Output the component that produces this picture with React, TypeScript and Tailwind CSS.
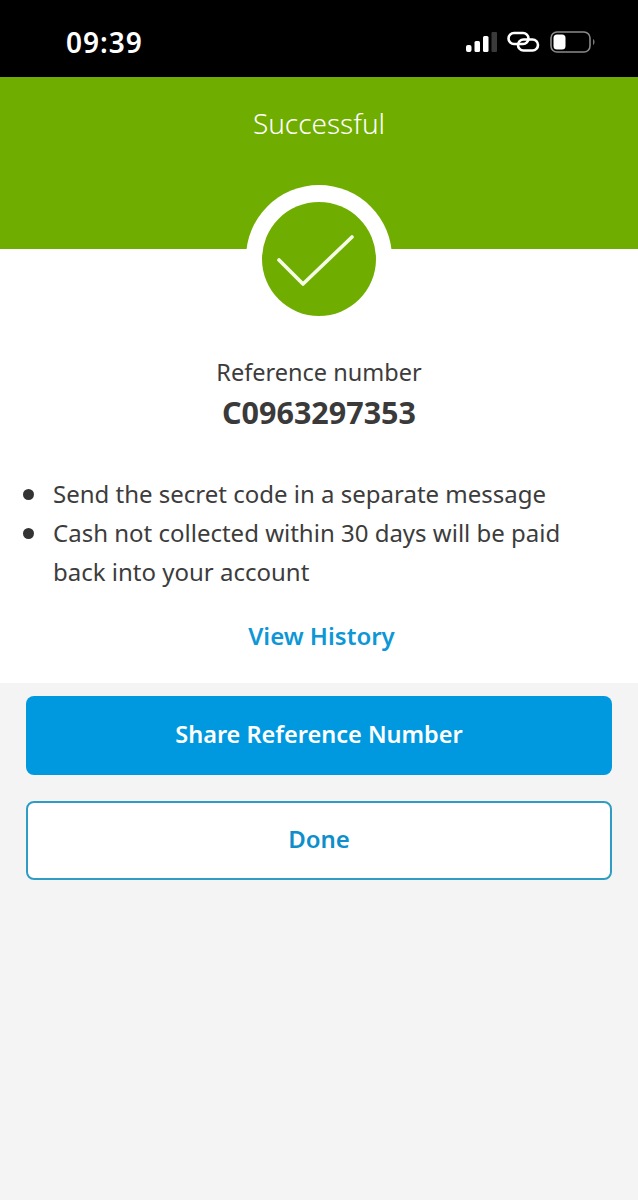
import React from 'react';

const font = { fontFamily: '"Noto Sans", sans-serif' };

const StatusIcons: React.FC = () => (
  <div className="flex items-center">
    <svg width="32" height="22" viewBox="0 0 32 22">
      <rect x="0" y="14" width="5.5" height="7" rx="2" fill="#fff" />
      <rect x="8.5" y="10" width="5.5" height="11" rx="1.5" fill="#fff" />
      <rect x="17" y="5" width="5.5" height="16" rx="1.5" fill="#fff" />
      <rect x="25.5" y="1" width="5.5" height="20" rx="1" fill="#3a3a3a" />
    </svg>
    <svg width="33" height="22" viewBox="0 0 33 22" fill="none" stroke="#fff" strokeWidth="2.6" className="ml-[9px]">
      <rect x="1.5" y="2" width="20" height="11" rx="5.5" />
      <rect x="11" y="8.5" width="20" height="11" rx="5.5" />
    </svg>
    <svg width="46" height="22" viewBox="0 0 46 22" fill="none" className="ml-[10px]">
      <rect x="1" y="1" width="39" height="20" rx="6" stroke="#8a8a8a" strokeWidth="1.6" />
      <rect x="3.5" y="3.5" width="12" height="15" rx="3.5" fill="#fff" />
      <path d="M43 8 C45 9 45 13 43 14 Z" fill="#777" />
    </svg>
  </div>
);

export default function App() {
  return (
    <div className="w-[638px] h-[1200px] bg-[#f4f4f4] flex flex-col overflow-hidden" style={font}>
      <div className="h-[77px] bg-black flex items-center justify-between pl-[66px] pr-[42px] pt-[6px]">
        <span className="text-white text-[28px] font-semibold leading-none tracking-[1px]">09:39</span>
        <StatusIcons />
      </div>

      <div className="h-[172px] bg-[#6fae00] flex justify-center pt-[27px]">
        <h1 className="text-white text-[28px] font-light leading-[38px]">Successful</h1>
      </div>

      <div className="h-[434px] bg-white flex flex-col items-center">
        <div className="-mt-[64px] w-[146px] h-[146px] rounded-full bg-white flex items-center justify-center">
          <div className="w-[114px] h-[114px] rounded-full bg-[#6fae00] flex items-center justify-center mt-[2px]">
            <svg width="80" height="58" viewBox="0 0 80 58" fill="none" className="mt-[8px] -ml-[7px]">
              <path d="M3 26 L27 50 L76 3" stroke="#f6fbe8" strokeWidth="3.6" strokeLinecap="round" strokeLinejoin="round" />
            </svg>
          </div>
        </div>

        <p className="mt-[21px] text-[#3c3c3c] text-[23.5px] leading-[40px]">Reference number</p>
        <p className="text-[#3a3a3a] text-[30.5px] font-bold leading-[40px]">C0963297353</p>

        <ul className="mt-[42px] w-full pl-[23px] pr-[40px] text-[#3c3c3c] text-[24px] leading-[39px]">
          <li className="flex">
            <span className="mt-[15px] mr-[19px] w-[11px] h-[11px] rounded-full bg-[#333] shrink-0" />
            <span>Send the secret code in a separate message</span>
          </li>
          <li className="flex">
            <span className="mt-[15px] mr-[19px] w-[11px] h-[11px] rounded-full bg-[#333] shrink-0" />
            <span>Cash not collected within 30 days will be paid back into your account</span>
          </li>
        </ul>

        <button className="mt-[25px] ml-[5px] text-[#0e97d6] text-[24px] font-semibold leading-[40px]">View History</button>
      </div>

      <div className="flex flex-col gap-[26px] px-[26px] pt-[13px]">
        <button className="h-[79px] pb-[2px] rounded-[8px] bg-[#0099df] text-white text-[23.5px] font-semibold">Share Reference Number</button>
        <button className="h-[79px] pb-[3px] rounded-[8px] bg-white border-2 border-[#2f9cc4] text-[#0e8fcb] text-[24px] font-semibold">Done</button>
      </div>
    </div>
  );
}
